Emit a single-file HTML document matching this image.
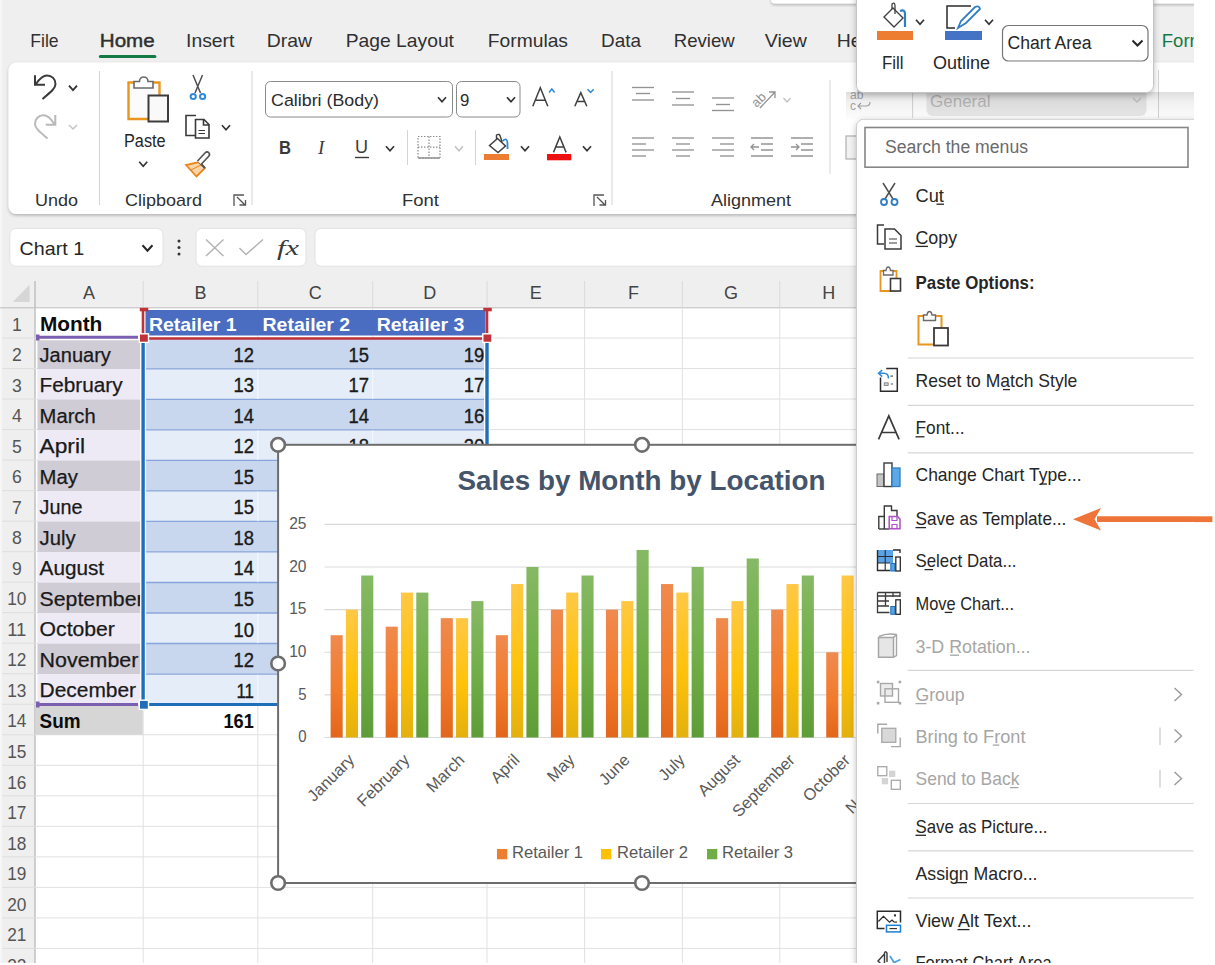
<!DOCTYPE html>
<html><head><meta charset="utf-8"><title>Excel - Save as Template</title>
<style>html,body{margin:0;padding:0;background:#fff;}body{width:1215px;height:965px;overflow:hidden;font-family:"Liberation Sans",sans-serif;}svg{display:block;}</style>
</head><body>
<svg width="1215" height="965" viewBox="0 0 1215 965" font-family="'Liberation Sans', sans-serif"><rect x="0" y="0" width="1215" height="965" fill="#ffffff"/>
<rect x="0" y="0" width="1194" height="963" fill="#efefef"/>
<rect x="0" y="0" width="2" height="963" fill="#f6f6f6"/>
<text x="30.3" y="46.6" font-size="18.5" fill="#303030" textLength="28.3" lengthAdjust="spacingAndGlyphs">File</text>
<text x="99.8" y="46.6" font-size="18.5" fill="#303030" textLength="54.9" lengthAdjust="spacingAndGlyphs" stroke="#303030" stroke-width="0.45">Home</text>
<text x="186" y="46.6" font-size="18.5" fill="#303030" textLength="48.4" lengthAdjust="spacingAndGlyphs">Insert</text>
<text x="266.7" y="46.6" font-size="18.5" fill="#303030" textLength="45.3" lengthAdjust="spacingAndGlyphs">Draw</text>
<text x="345.7" y="46.6" font-size="18.5" fill="#303030" textLength="108.3" lengthAdjust="spacingAndGlyphs">Page Layout</text>
<text x="487.8" y="46.6" font-size="18.5" fill="#303030" textLength="80.2" lengthAdjust="spacingAndGlyphs">Formulas</text>
<text x="601" y="46.6" font-size="18.5" fill="#303030" textLength="40" lengthAdjust="spacingAndGlyphs">Data</text>
<text x="673.8" y="46.6" font-size="18.5" fill="#303030" textLength="61" lengthAdjust="spacingAndGlyphs">Review</text>
<text x="764.8" y="46.6" font-size="18.5" fill="#303030" textLength="42" lengthAdjust="spacingAndGlyphs">View</text>
<text x="836.8" y="46.6" font-size="18.5" fill="#303030" textLength="40" lengthAdjust="spacingAndGlyphs">Help</text>
<rect x="98.8" y="55" width="57.6" height="3" fill="#137a43" rx="1.5"/>
<defs><filter id="sh" x="-5%" y="-20%" width="110%" height="140%"><feDropShadow dx="0" dy="1.5" stdDeviation="1.5" flood-color="#000" flood-opacity="0.26"/></filter><filter id="sh2" x="-20%" y="-20%" width="140%" height="140%"><feDropShadow dx="0" dy="2" stdDeviation="3" flood-color="#000" flood-opacity="0.25"/></filter><linearGradient id="g1" x1="0" y1="0" x2="0" y2="1"><stop offset="0" stop-color="#ef8a4e"/><stop offset="0.55" stop-color="#f27b2c"/><stop offset="1" stop-color="#e2661b"/></linearGradient><linearGradient id="g2" x1="0" y1="0" x2="0" y2="1"><stop offset="0" stop-color="#ffc845"/><stop offset="0.55" stop-color="#ffc20a"/><stop offset="1" stop-color="#e3b00e"/></linearGradient><linearGradient id="g3" x1="0" y1="0" x2="0" y2="1"><stop offset="0" stop-color="#86b964"/><stop offset="0.55" stop-color="#70ad47"/><stop offset="1" stop-color="#5e9c37"/></linearGradient><clipPath id="clipA"><rect x="35" y="300" width="106.5" height="450"/></clipPath></defs>
<rect x="8.5" y="62.5" width="1260" height="151.5" fill="#ffffff" rx="8" filter="url(#sh)"/>
<line x1="99.5" y1="71" x2="99.5" y2="205" stroke="#d4d4d4" stroke-width="1"/>
<line x1="252" y1="71" x2="252" y2="205" stroke="#d4d4d4" stroke-width="1"/>
<line x1="612" y1="71" x2="612" y2="205" stroke="#d4d4d4" stroke-width="1"/>
<line x1="830" y1="80" x2="830" y2="174" stroke="#d4d4d4" stroke-width="1"/>
<line x1="912.6" y1="80" x2="912.6" y2="118" stroke="#d4d4d4" stroke-width="1"/>
<line x1="1158.5" y1="70" x2="1158.5" y2="118" stroke="#d4d4d4" stroke-width="1"/>
<text x="35" y="206" font-size="17" fill="#303030" textLength="43" lengthAdjust="spacingAndGlyphs">Undo</text>
<text x="125" y="206" font-size="17" fill="#303030" textLength="77" lengthAdjust="spacingAndGlyphs">Clipboard</text>
<text x="402" y="206" font-size="17" fill="#303030" textLength="37" lengthAdjust="spacingAndGlyphs">Font</text>
<text x="711" y="206" font-size="17" fill="#303030" textLength="80" lengthAdjust="spacingAndGlyphs">Alignment</text>
<path d="M234,206 V195 H244 M237,197 L245,205 M239.5,205 H245.5 V200" fill="none" stroke="#555" stroke-width="1.3"/>
<path d="M594,206 V195 H604 M597,197 L605,205 M599.5,205 H605.5 V200" fill="none" stroke="#555" stroke-width="1.3"/>
<path d="M35,75.3 V84.8 H45 M36,84 C40,78 44,75.5 47,75.5 C52,75.5 55.5,79 55.5,84 C55.5,88 52,91 42.5,99" fill="none" stroke="#3a3a3a" stroke-width="2"/>
<path d="M69,85.55 L73,90.05 L77,85.55" fill="none" stroke="#333" stroke-width="1.8"/>
<path d="M55.3,115 V124.7 H45.7 M54.3,124 C50.5,118 46.5,115.3 43.5,115.3 C38.5,115.3 35,119 35,124 C35,128 38.5,131 47.5,138.5" fill="none" stroke="#b9b9b9" stroke-width="2"/>
<path d="M69,125 L73,129 L77,125" fill="none" stroke="#c4c4c4" stroke-width="1.5"/>
<path d="M128.5,82.5 H159.5 V119 H128.5 Z" fill="#fbfbfb" stroke="#e8961e" stroke-width="2.4"/>
<path d="M134,88 V81.5 H139.5 C139.5,75.5 148,75.5 148,81.5 H153 V88 Z" fill="#ffffff" stroke="#6a6a6a" stroke-width="1.6"/>
<rect x="148.5" y="95.5" width="19.5" height="26" fill="#f9f9f9" stroke="#3c3c3c" stroke-width="2"/>
<text x="124" y="146.5" font-size="17.5" fill="#262626" textLength="41.6" lengthAdjust="spacingAndGlyphs">Paste</text>
<path d="M139.2,161.75 L143.2,166.25 L147.2,161.75" fill="none" stroke="#333" stroke-width="1.7"/>
<path d="M193,75 L200.5,93 M202.5,75 L195,93" fill="none" stroke="#505050" stroke-width="1.5"/>
<circle cx="193.2" cy="96.5" r="2.6" fill="#ffffff" stroke="#2f8ad8" stroke-width="2"/>
<circle cx="202.6" cy="96.5" r="2.6" fill="#ffffff" stroke="#2f8ad8" stroke-width="2"/>
<path d="M196,115.5 H186 V135.5 H195" fill="none" stroke="#3a3a3a" stroke-width="1.6"/>
<path d="M195.5,119.5 H204 L209,124.5 V138 H195.5 Z M203.5,119.5 V125 H209" fill="#fff" stroke="#3a3a3a" stroke-width="1.6"/>
<path d="M198.5,130.5 H205 M198.5,133.5 H205" fill="none" stroke="#3a3a3a" stroke-width="1.1"/>
<path d="M222,125.25 L226,129.75 L230,125.25" fill="none" stroke="#333" stroke-width="1.7"/>
<path d="M186,165 L196.5,176.5 L205,168 L199,162 Z" fill="#fcd3a4" stroke="#e8861e" stroke-width="1.8"/>
<path d="M191,170 L201,165" fill="none" stroke="#e8861e" stroke-width="1"/>
<path d="M199,162 L205,168" fill="none" stroke="#505050" stroke-width="1.8"/>
<path d="M201,164.5 L208.5,156.5 Q210.5,154.5 208.8,152.8 Q207,151 205,153 L197.5,161" fill="#fff" stroke="#505050" stroke-width="1.6"/>
<rect x="265.5" y="81.5" width="187" height="35.5" fill="#ffffff" stroke="#8a8a8a" stroke-width="1" rx="5"/>
<text x="271" y="105.8" font-size="16.8" fill="#2b2b2b" textLength="108" lengthAdjust="spacingAndGlyphs">Calibri (Body)</text>
<path d="M438,97.25 L442,101.75 L446,97.25" fill="none" stroke="#333" stroke-width="1.7"/>
<rect x="456.5" y="81.5" width="63.5" height="35.5" fill="#ffffff" stroke="#8a8a8a" stroke-width="1" rx="5"/>
<text x="460" y="105.8" font-size="16.8" fill="#2b2b2b">9</text>
<path d="M507,97.25 L511,101.75 L515,97.25" fill="none" stroke="#333" stroke-width="1.7"/>
<path d="M532.8,106.3 L540.3,87.8 L547.8,106.3 M535.3,100.2 H545.3" fill="none" stroke="#404040" stroke-width="1.5"/>
<path d="M549,92.5 L551.8,89 L554.6,92.5" fill="none" stroke="#2f8ad8" stroke-width="1.5"/>
<path d="M574.8,106.3 L580.8,92.6 L586.8,106.3 M576.9,101.4 H584.7" fill="none" stroke="#404040" stroke-width="1.5"/>
<path d="M587.5,89.2 L590.6,92.4 L593.7,89.2" fill="none" stroke="#2f8ad8" stroke-width="1.5"/>
<text x="279" y="154" font-size="19" fill="#3a3a3a" font-weight="bold" textLength="12" lengthAdjust="spacingAndGlyphs">B</text>
<text x="318" y="154" font-size="19" fill="#3a3a3a" font-style="italic" font-family="Liberation Serif">I</text>
<text x="355" y="153" font-size="18" fill="#3a3a3a" textLength="13" lengthAdjust="spacingAndGlyphs">U</text>
<line x1="355" y1="157.5" x2="369" y2="157.5" stroke="#3a3a3a" stroke-width="1.4"/>
<path d="M386,146.25 L390,150.75 L394,146.25" fill="none" stroke="#333" stroke-width="1.7"/>
<line x1="407.5" y1="130" x2="407.5" y2="165" stroke="#d4d4d4" stroke-width="1"/>
<rect x="418" y="136.5" width="22" height="21.5" fill="none" stroke="#8a8a8a" stroke-width="1.2" stroke-dasharray="1.4,1.6"/>
<path d="M429,136.5 V158 M418,147.2 H440" fill="none" stroke="#8a8a8a" stroke-width="1.2" stroke-dasharray="1.4,1.6"/>
<line x1="418" y1="158" x2="440" y2="158" stroke="#8a8a8a" stroke-width="1.4"/>
<path d="M455,146.25 L459,150.75 L463,146.25" fill="none" stroke="#c0c0c0" stroke-width="1.5"/>
<line x1="475.5" y1="130" x2="475.5" y2="165" stroke="#d4d4d4" stroke-width="1"/>
<path d="M489.5,145.5 L497.5,138.5 L505.5,146 L498,152.5 Z" fill="#fff" stroke="#404040" stroke-width="1.5"/>
<path d="M496.5,139.5 V135 Q499.5,133 500.5,137 L502,142" fill="none" stroke="#404040" stroke-width="1.4"/>
<path d="M502.5,141 Q507,137 507.5,143 V149" fill="none" stroke="#2f8ad8" stroke-width="1.8"/>
<rect x="484" y="154" width="25" height="6" fill="#ed7d31"/>
<path d="M521,146.25 L525,150.75 L529,146.25" fill="none" stroke="#333" stroke-width="1.7"/>
<path d="M553.5,152.4 L559.8,137 L566.1,152.4 M555.6,147 H564" fill="none" stroke="#404040" stroke-width="1.5"/>
<rect x="547" y="154" width="24.3" height="6.3" fill="#ee1111"/>
<path d="M583,146.25 L587,150.75 L591,146.25" fill="none" stroke="#333" stroke-width="1.7"/>
<line x1="632" y1="87.5" x2="654" y2="87.5" stroke="#939393" stroke-width="1.35"/>
<line x1="636" y1="93.5" x2="650" y2="93.5" stroke="#939393" stroke-width="1.35"/>
<line x1="632" y1="100" x2="654" y2="100" stroke="#939393" stroke-width="1.35"/>
<line x1="672" y1="92" x2="694" y2="92" stroke="#939393" stroke-width="1.35"/>
<line x1="676" y1="98.5" x2="690" y2="98.5" stroke="#939393" stroke-width="1.35"/>
<line x1="672" y1="105" x2="694" y2="105" stroke="#939393" stroke-width="1.35"/>
<line x1="712" y1="98" x2="734" y2="98" stroke="#939393" stroke-width="1.35"/>
<line x1="716" y1="104.5" x2="730" y2="104.5" stroke="#939393" stroke-width="1.35"/>
<line x1="712" y1="110.5" x2="734" y2="110.5" stroke="#939393" stroke-width="1.35"/>
<text x="750" y="104" font-size="13" fill="#939393" transform="rotate(-45 758 98)">ab</text>
<path d="M760,108 L775,92 M769,92 H775 V98" fill="none" stroke="#939393" stroke-width="1.3"/>
<path d="M783.5,98 L787,102 L790.5,98" fill="none" stroke="#c0c0c0" stroke-width="1.3"/>
<line x1="632" y1="138" x2="654" y2="138" stroke="#939393" stroke-width="1.35"/>
<line x1="632" y1="144" x2="646" y2="144" stroke="#939393" stroke-width="1.35"/>
<line x1="632" y1="150" x2="654" y2="150" stroke="#939393" stroke-width="1.35"/>
<line x1="632" y1="156" x2="646" y2="156" stroke="#939393" stroke-width="1.35"/>
<line x1="672" y1="138" x2="694" y2="138" stroke="#939393" stroke-width="1.35"/>
<line x1="676" y1="144" x2="690" y2="144" stroke="#939393" stroke-width="1.35"/>
<line x1="672" y1="150" x2="694" y2="150" stroke="#939393" stroke-width="1.35"/>
<line x1="676" y1="156" x2="690" y2="156" stroke="#939393" stroke-width="1.35"/>
<line x1="712" y1="138" x2="734" y2="138" stroke="#939393" stroke-width="1.35"/>
<line x1="720" y1="144" x2="734" y2="144" stroke="#939393" stroke-width="1.35"/>
<line x1="712" y1="150" x2="734" y2="150" stroke="#939393" stroke-width="1.35"/>
<line x1="720" y1="156" x2="734" y2="156" stroke="#939393" stroke-width="1.35"/>
<line x1="751" y1="138" x2="773" y2="138" stroke="#939393" stroke-width="1.5"/>
<line x1="761" y1="144" x2="773" y2="144" stroke="#939393" stroke-width="1.5"/>
<line x1="761" y1="150" x2="773" y2="150" stroke="#939393" stroke-width="1.5"/>
<line x1="751" y1="156" x2="773" y2="156" stroke="#939393" stroke-width="1.5"/>
<path d="M751,147 H759 M754,144 L751,147 L754,150" fill="none" stroke="#939393" stroke-width="1.3"/>
<line x1="791" y1="138" x2="813" y2="138" stroke="#939393" stroke-width="1.5"/>
<line x1="801" y1="144" x2="813" y2="144" stroke="#939393" stroke-width="1.5"/>
<line x1="801" y1="150" x2="813" y2="150" stroke="#939393" stroke-width="1.5"/>
<line x1="791" y1="156" x2="813" y2="156" stroke="#939393" stroke-width="1.5"/>
<path d="M791,147 H799 M796,144 L799,147 L796,150" fill="none" stroke="#939393" stroke-width="1.3"/>
<text x="850" y="99" font-size="12" fill="#a8a8a8">ab</text>
<text x="850" y="110" font-size="12" fill="#a8a8a8">c</text>
<path d="M858,106 H866 Q870,106 870,102 M861,103 L858,106 L861,109" fill="none" stroke="#a8a8a8" stroke-width="1.2"/>
<rect x="846" y="136" width="12" height="23" fill="#f2f2f2" stroke="#b0b0b0" stroke-width="1.2"/>
<rect x="926.5" y="60" width="220" height="56" fill="#e9e9e9" rx="6"/>
<text x="930" y="107" font-size="17" fill="#b8b8b8">General</text>
<path d="M1133,98 L1137,102 L1141,98" fill="none" stroke="#c4c4c4" stroke-width="1.5"/>
<rect x="9.8" y="228.4" width="153.2" height="37.8" fill="#ffffff" stroke="#e2e2e2" stroke-width="1" rx="6"/>
<text x="19.6" y="254.8" font-size="19" fill="#262626" textLength="64.5" lengthAdjust="spacingAndGlyphs">Chart 1</text>
<path d="M142.5,245.25 L147.5,250.75 L152.5,245.25" fill="none" stroke="#262626" stroke-width="2"/>
<circle cx="179" cy="241" r="1.5" fill="#333"/>
<circle cx="179" cy="247.5" r="1.5" fill="#333"/>
<circle cx="179" cy="254" r="1.5" fill="#333"/>
<rect x="196" y="228.4" width="110" height="37.8" fill="#ffffff" stroke="#e2e2e2" stroke-width="1" rx="6"/>
<path d="M206,239.5 L223.5,256 M223.5,239.5 L206,256" fill="none" stroke="#b4b4b4" stroke-width="1.5"/>
<path d="M239.5,248 L246,254.5 L263,239.5" fill="none" stroke="#b4b4b4" stroke-width="1.5"/>
<text x="277" y="255" font-size="21" fill="#3a3a3a" textLength="22" lengthAdjust="spacingAndGlyphs" font-style="italic" font-family="Liberation Serif">fx</text>
<rect x="315" y="228.4" width="900" height="37.8" fill="#ffffff" stroke="#e2e2e2" stroke-width="1" rx="6"/>
<rect x="35" y="307.5" width="1159" height="655.5" fill="#ffffff"/>
<path d="M29.6,284.7 V302 H12.8 Z" fill="#d6d6d6" stroke="none" stroke-width="1"/>
<line x1="143.2" y1="281" x2="143.2" y2="307.5" stroke="#dadada" stroke-width="1"/>
<line x1="257.8" y1="281" x2="257.8" y2="307.5" stroke="#dadada" stroke-width="1"/>
<line x1="372.7" y1="281" x2="372.7" y2="307.5" stroke="#dadada" stroke-width="1"/>
<line x1="487" y1="281" x2="487" y2="307.5" stroke="#dadada" stroke-width="1"/>
<line x1="584.6" y1="281" x2="584.6" y2="307.5" stroke="#dadada" stroke-width="1"/>
<line x1="682.4" y1="281" x2="682.4" y2="307.5" stroke="#dadada" stroke-width="1"/>
<line x1="779.8" y1="281" x2="779.8" y2="307.5" stroke="#dadada" stroke-width="1"/>
<line x1="877.5" y1="281" x2="877.5" y2="307.5" stroke="#dadada" stroke-width="1"/>
<line x1="35" y1="281" x2="35" y2="963" stroke="#b8b8b8" stroke-width="1.3"/>
<line x1="0" y1="307.8" x2="1194" y2="307.8" stroke="#bdbdbd" stroke-width="1"/>
<text x="89.1" y="299" font-size="18" fill="#444" text-anchor="middle">A</text>
<text x="200.5" y="299" font-size="18" fill="#444" text-anchor="middle">B</text>
<text x="315.25" y="299" font-size="18" fill="#444" text-anchor="middle">C</text>
<text x="429.85" y="299" font-size="18" fill="#444" text-anchor="middle">D</text>
<text x="535.8" y="299" font-size="18" fill="#444" text-anchor="middle">E</text>
<text x="633.5" y="299" font-size="18" fill="#444" text-anchor="middle">F</text>
<text x="731.1" y="299" font-size="18" fill="#444" text-anchor="middle">G</text>
<text x="828.65" y="299" font-size="18" fill="#444" text-anchor="middle">H</text>
<text x="16.8" y="330.7" font-size="18.5" fill="#555" text-anchor="middle" textLength="9.8" lengthAdjust="spacingAndGlyphs">1</text>
<line x1="2" y1="338.02" x2="35" y2="338.02" stroke="#dedede" stroke-width="1"/>
<text x="16.8" y="361.22" font-size="18.5" fill="#555" text-anchor="middle" textLength="9.8" lengthAdjust="spacingAndGlyphs">2</text>
<line x1="2" y1="368.54" x2="35" y2="368.54" stroke="#dedede" stroke-width="1"/>
<text x="16.8" y="391.74" font-size="18.5" fill="#555" text-anchor="middle" textLength="9.8" lengthAdjust="spacingAndGlyphs">3</text>
<line x1="2" y1="399.06" x2="35" y2="399.06" stroke="#dedede" stroke-width="1"/>
<text x="16.8" y="422.26" font-size="18.5" fill="#555" text-anchor="middle" textLength="9.8" lengthAdjust="spacingAndGlyphs">4</text>
<line x1="2" y1="429.58" x2="35" y2="429.58" stroke="#dedede" stroke-width="1"/>
<text x="16.8" y="452.78" font-size="18.5" fill="#555" text-anchor="middle" textLength="9.8" lengthAdjust="spacingAndGlyphs">5</text>
<line x1="2" y1="460.1" x2="35" y2="460.1" stroke="#dedede" stroke-width="1"/>
<text x="16.8" y="483.3" font-size="18.5" fill="#555" text-anchor="middle" textLength="9.8" lengthAdjust="spacingAndGlyphs">6</text>
<line x1="2" y1="490.62" x2="35" y2="490.62" stroke="#dedede" stroke-width="1"/>
<text x="16.8" y="513.82" font-size="18.5" fill="#555" text-anchor="middle" textLength="9.8" lengthAdjust="spacingAndGlyphs">7</text>
<line x1="2" y1="521.14" x2="35" y2="521.14" stroke="#dedede" stroke-width="1"/>
<text x="16.8" y="544.34" font-size="18.5" fill="#555" text-anchor="middle" textLength="9.8" lengthAdjust="spacingAndGlyphs">8</text>
<line x1="2" y1="551.66" x2="35" y2="551.66" stroke="#dedede" stroke-width="1"/>
<text x="16.8" y="574.86" font-size="18.5" fill="#555" text-anchor="middle" textLength="9.8" lengthAdjust="spacingAndGlyphs">9</text>
<line x1="2" y1="582.18" x2="35" y2="582.18" stroke="#dedede" stroke-width="1"/>
<text x="16.8" y="605.38" font-size="18.5" fill="#555" text-anchor="middle" textLength="19.2" lengthAdjust="spacingAndGlyphs">10</text>
<line x1="2" y1="612.7" x2="35" y2="612.7" stroke="#dedede" stroke-width="1"/>
<text x="16.8" y="635.9" font-size="18.5" fill="#555" text-anchor="middle" textLength="19.2" lengthAdjust="spacingAndGlyphs">11</text>
<line x1="2" y1="643.22" x2="35" y2="643.22" stroke="#dedede" stroke-width="1"/>
<text x="16.8" y="666.42" font-size="18.5" fill="#555" text-anchor="middle" textLength="19.2" lengthAdjust="spacingAndGlyphs">12</text>
<line x1="2" y1="673.74" x2="35" y2="673.74" stroke="#dedede" stroke-width="1"/>
<text x="16.8" y="696.94" font-size="18.5" fill="#555" text-anchor="middle" textLength="19.2" lengthAdjust="spacingAndGlyphs">13</text>
<line x1="2" y1="704.26" x2="35" y2="704.26" stroke="#dedede" stroke-width="1"/>
<text x="16.8" y="727.46" font-size="18.5" fill="#555" text-anchor="middle" textLength="19.2" lengthAdjust="spacingAndGlyphs">14</text>
<line x1="2" y1="734.78" x2="35" y2="734.78" stroke="#dedede" stroke-width="1"/>
<text x="16.8" y="757.98" font-size="18.5" fill="#555" text-anchor="middle" textLength="19.2" lengthAdjust="spacingAndGlyphs">15</text>
<line x1="2" y1="765.3" x2="35" y2="765.3" stroke="#dedede" stroke-width="1"/>
<text x="16.8" y="788.5" font-size="18.5" fill="#555" text-anchor="middle" textLength="19.2" lengthAdjust="spacingAndGlyphs">16</text>
<line x1="2" y1="795.82" x2="35" y2="795.82" stroke="#dedede" stroke-width="1"/>
<text x="16.8" y="819.02" font-size="18.5" fill="#555" text-anchor="middle" textLength="19.2" lengthAdjust="spacingAndGlyphs">17</text>
<line x1="2" y1="826.34" x2="35" y2="826.34" stroke="#dedede" stroke-width="1"/>
<text x="16.8" y="849.54" font-size="18.5" fill="#555" text-anchor="middle" textLength="19.2" lengthAdjust="spacingAndGlyphs">18</text>
<line x1="2" y1="856.86" x2="35" y2="856.86" stroke="#dedede" stroke-width="1"/>
<text x="16.8" y="880.06" font-size="18.5" fill="#555" text-anchor="middle" textLength="19.2" lengthAdjust="spacingAndGlyphs">19</text>
<line x1="2" y1="887.38" x2="35" y2="887.38" stroke="#dedede" stroke-width="1"/>
<text x="16.8" y="910.58" font-size="18.5" fill="#555" text-anchor="middle" textLength="19.2" lengthAdjust="spacingAndGlyphs">20</text>
<line x1="2" y1="917.9" x2="35" y2="917.9" stroke="#dedede" stroke-width="1"/>
<text x="16.8" y="941.1" font-size="18.5" fill="#555" text-anchor="middle" textLength="19.2" lengthAdjust="spacingAndGlyphs">21</text>
<line x1="2" y1="948.42" x2="35" y2="948.42" stroke="#dedede" stroke-width="1"/>
<text x="16.8" y="971.62" font-size="18.5" fill="#555" text-anchor="middle" textLength="19.2" lengthAdjust="spacingAndGlyphs">22</text>
<line x1="35" y1="338.02" x2="1194" y2="338.02" stroke="#e1e1e1" stroke-width="1"/>
<line x1="35" y1="368.54" x2="1194" y2="368.54" stroke="#e1e1e1" stroke-width="1"/>
<line x1="35" y1="399.06" x2="1194" y2="399.06" stroke="#e1e1e1" stroke-width="1"/>
<line x1="35" y1="429.58" x2="1194" y2="429.58" stroke="#e1e1e1" stroke-width="1"/>
<line x1="35" y1="460.1" x2="1194" y2="460.1" stroke="#e1e1e1" stroke-width="1"/>
<line x1="35" y1="490.62" x2="1194" y2="490.62" stroke="#e1e1e1" stroke-width="1"/>
<line x1="35" y1="521.14" x2="1194" y2="521.14" stroke="#e1e1e1" stroke-width="1"/>
<line x1="35" y1="551.66" x2="1194" y2="551.66" stroke="#e1e1e1" stroke-width="1"/>
<line x1="35" y1="582.18" x2="1194" y2="582.18" stroke="#e1e1e1" stroke-width="1"/>
<line x1="35" y1="612.7" x2="1194" y2="612.7" stroke="#e1e1e1" stroke-width="1"/>
<line x1="35" y1="643.22" x2="1194" y2="643.22" stroke="#e1e1e1" stroke-width="1"/>
<line x1="35" y1="673.74" x2="1194" y2="673.74" stroke="#e1e1e1" stroke-width="1"/>
<line x1="35" y1="704.26" x2="1194" y2="704.26" stroke="#e1e1e1" stroke-width="1"/>
<line x1="35" y1="734.78" x2="1194" y2="734.78" stroke="#e1e1e1" stroke-width="1"/>
<line x1="35" y1="765.3" x2="1194" y2="765.3" stroke="#e1e1e1" stroke-width="1"/>
<line x1="35" y1="795.82" x2="1194" y2="795.82" stroke="#e1e1e1" stroke-width="1"/>
<line x1="35" y1="826.34" x2="1194" y2="826.34" stroke="#e1e1e1" stroke-width="1"/>
<line x1="35" y1="856.86" x2="1194" y2="856.86" stroke="#e1e1e1" stroke-width="1"/>
<line x1="35" y1="887.38" x2="1194" y2="887.38" stroke="#e1e1e1" stroke-width="1"/>
<line x1="35" y1="917.9" x2="1194" y2="917.9" stroke="#e1e1e1" stroke-width="1"/>
<line x1="35" y1="948.42" x2="1194" y2="948.42" stroke="#e1e1e1" stroke-width="1"/>
<line x1="143.2" y1="307.5" x2="143.2" y2="963" stroke="#e1e1e1" stroke-width="1"/>
<line x1="257.8" y1="307.5" x2="257.8" y2="963" stroke="#e1e1e1" stroke-width="1"/>
<line x1="372.7" y1="307.5" x2="372.7" y2="963" stroke="#e1e1e1" stroke-width="1"/>
<line x1="487" y1="307.5" x2="487" y2="963" stroke="#e1e1e1" stroke-width="1"/>
<line x1="584.6" y1="307.5" x2="584.6" y2="963" stroke="#e1e1e1" stroke-width="1"/>
<line x1="682.4" y1="307.5" x2="682.4" y2="963" stroke="#e1e1e1" stroke-width="1"/>
<line x1="779.8" y1="307.5" x2="779.8" y2="963" stroke="#e1e1e1" stroke-width="1"/>
<line x1="877.5" y1="307.5" x2="877.5" y2="963" stroke="#e1e1e1" stroke-width="1"/>
<rect x="37.5" y="338.52" width="104" height="30.52" fill="#d0ccd6"/>
<rect x="146" y="338.82" width="339" height="29.72" fill="#c8d6ee"/>
<rect x="37.5" y="369.04" width="104" height="30.52" fill="#eeeaf5"/>
<rect x="146" y="369.34" width="339" height="29.72" fill="#e5edf8"/>
<rect x="37.5" y="399.56" width="104" height="30.52" fill="#d0ccd6"/>
<rect x="146" y="399.86" width="339" height="29.72" fill="#c8d6ee"/>
<rect x="37.5" y="430.08" width="104" height="30.52" fill="#eeeaf5"/>
<rect x="146" y="430.38" width="339" height="29.72" fill="#e5edf8"/>
<rect x="37.5" y="460.6" width="104" height="30.52" fill="#d0ccd6"/>
<rect x="146" y="460.9" width="339" height="29.72" fill="#c8d6ee"/>
<rect x="37.5" y="491.12" width="104" height="30.52" fill="#eeeaf5"/>
<rect x="146" y="491.42" width="339" height="29.72" fill="#e5edf8"/>
<rect x="37.5" y="521.64" width="104" height="30.52" fill="#d0ccd6"/>
<rect x="146" y="521.94" width="339" height="29.72" fill="#c8d6ee"/>
<rect x="37.5" y="552.16" width="104" height="30.52" fill="#eeeaf5"/>
<rect x="146" y="552.46" width="339" height="29.72" fill="#e5edf8"/>
<rect x="37.5" y="582.68" width="104" height="30.52" fill="#d0ccd6"/>
<rect x="146" y="582.98" width="339" height="29.72" fill="#c8d6ee"/>
<rect x="37.5" y="613.2" width="104" height="30.52" fill="#eeeaf5"/>
<rect x="146" y="613.5" width="339" height="29.72" fill="#e5edf8"/>
<rect x="37.5" y="643.72" width="104" height="30.52" fill="#d0ccd6"/>
<rect x="146" y="644.02" width="339" height="29.72" fill="#c8d6ee"/>
<rect x="37.5" y="674.24" width="104" height="30.52" fill="#eeeaf5"/>
<rect x="146" y="674.54" width="339" height="29.72" fill="#e5edf8"/>
<line x1="145" y1="368.84" x2="485.5" y2="368.84" stroke="#86a5da" stroke-width="1.3"/>
<line x1="145" y1="399.36" x2="485.5" y2="399.36" stroke="#86a5da" stroke-width="1.3"/>
<line x1="145" y1="429.88" x2="485.5" y2="429.88" stroke="#86a5da" stroke-width="1.3"/>
<line x1="145" y1="460.4" x2="485.5" y2="460.4" stroke="#86a5da" stroke-width="1.3"/>
<line x1="145" y1="490.92" x2="485.5" y2="490.92" stroke="#86a5da" stroke-width="1.3"/>
<line x1="145" y1="521.44" x2="485.5" y2="521.44" stroke="#86a5da" stroke-width="1.3"/>
<line x1="145" y1="551.96" x2="485.5" y2="551.96" stroke="#86a5da" stroke-width="1.3"/>
<line x1="145" y1="582.48" x2="485.5" y2="582.48" stroke="#86a5da" stroke-width="1.3"/>
<line x1="145" y1="613" x2="485.5" y2="613" stroke="#86a5da" stroke-width="1.3"/>
<line x1="145" y1="643.52" x2="485.5" y2="643.52" stroke="#86a5da" stroke-width="1.3"/>
<line x1="145" y1="674.04" x2="485.5" y2="674.04" stroke="#86a5da" stroke-width="1.3"/>
<line x1="257.8" y1="369.54" x2="257.8" y2="399.06" stroke="#f4f8fd" stroke-width="1.2"/>
<line x1="257.8" y1="430.58" x2="257.8" y2="460.1" stroke="#f4f8fd" stroke-width="1.2"/>
<line x1="257.8" y1="491.62" x2="257.8" y2="521.14" stroke="#f4f8fd" stroke-width="1.2"/>
<line x1="257.8" y1="552.66" x2="257.8" y2="582.18" stroke="#f4f8fd" stroke-width="1.2"/>
<line x1="257.8" y1="613.7" x2="257.8" y2="643.22" stroke="#f4f8fd" stroke-width="1.2"/>
<line x1="257.8" y1="674.74" x2="257.8" y2="704.26" stroke="#f4f8fd" stroke-width="1.2"/>
<line x1="372.7" y1="369.54" x2="372.7" y2="399.06" stroke="#f4f8fd" stroke-width="1.2"/>
<line x1="372.7" y1="430.58" x2="372.7" y2="460.1" stroke="#f4f8fd" stroke-width="1.2"/>
<line x1="372.7" y1="491.62" x2="372.7" y2="521.14" stroke="#f4f8fd" stroke-width="1.2"/>
<line x1="372.7" y1="552.66" x2="372.7" y2="582.18" stroke="#f4f8fd" stroke-width="1.2"/>
<line x1="372.7" y1="613.7" x2="372.7" y2="643.22" stroke="#f4f8fd" stroke-width="1.2"/>
<line x1="372.7" y1="674.74" x2="372.7" y2="704.26" stroke="#f4f8fd" stroke-width="1.2"/>
<rect x="145.5" y="310" width="340" height="25.5" fill="#4a6dc1"/>
<text x="39.9" y="330.9" font-size="19.5" fill="#0c0c0c" font-weight="bold" textLength="62.4" lengthAdjust="spacingAndGlyphs">Month</text>
<text x="148.9" y="330.9" font-size="19" fill="#ffffff" font-weight="bold" textLength="87.7" lengthAdjust="spacingAndGlyphs">Retailer 1</text>
<text x="262.5" y="330.9" font-size="19" fill="#ffffff" font-weight="bold" textLength="87.7" lengthAdjust="spacingAndGlyphs">Retailer 2</text>
<text x="376.7" y="330.9" font-size="19" fill="#ffffff" font-weight="bold" textLength="87.7" lengthAdjust="spacingAndGlyphs">Retailer 3</text>
<text x="39.6" y="361.72" font-size="19.5" fill="#1a1a1a" textLength="71.3" lengthAdjust="spacingAndGlyphs" clip-path="url(#clipA)" stroke="#1a1a1a" stroke-width="0.25">January</text>
<text x="254" y="361.82" font-size="19.5" fill="#1a1a1a" text-anchor="end" textLength="20.5" lengthAdjust="spacingAndGlyphs" stroke="#1a1a1a" stroke-width="0.35">12</text>
<text x="369" y="361.82" font-size="19.5" fill="#1a1a1a" text-anchor="end" textLength="20.5" lengthAdjust="spacingAndGlyphs" stroke="#1a1a1a" stroke-width="0.35">15</text>
<text x="484.2" y="361.82" font-size="19.5" fill="#1a1a1a" text-anchor="end" textLength="20.5" lengthAdjust="spacingAndGlyphs" stroke="#1a1a1a" stroke-width="0.35">19</text>
<text x="39.6" y="392.24" font-size="19.5" fill="#1a1a1a" textLength="83" lengthAdjust="spacingAndGlyphs" clip-path="url(#clipA)" stroke="#1a1a1a" stroke-width="0.25">February</text>
<text x="254" y="392.34" font-size="19.5" fill="#1a1a1a" text-anchor="end" textLength="20.5" lengthAdjust="spacingAndGlyphs" stroke="#1a1a1a" stroke-width="0.35">13</text>
<text x="369" y="392.34" font-size="19.5" fill="#1a1a1a" text-anchor="end" textLength="20.5" lengthAdjust="spacingAndGlyphs" stroke="#1a1a1a" stroke-width="0.35">17</text>
<text x="484.2" y="392.34" font-size="19.5" fill="#1a1a1a" text-anchor="end" textLength="20.5" lengthAdjust="spacingAndGlyphs" stroke="#1a1a1a" stroke-width="0.35">17</text>
<text x="39.6" y="422.76" font-size="19.5" fill="#1a1a1a" textLength="56.1" lengthAdjust="spacingAndGlyphs" clip-path="url(#clipA)" stroke="#1a1a1a" stroke-width="0.25">March</text>
<text x="254" y="422.86" font-size="19.5" fill="#1a1a1a" text-anchor="end" textLength="20.5" lengthAdjust="spacingAndGlyphs" stroke="#1a1a1a" stroke-width="0.35">14</text>
<text x="369" y="422.86" font-size="19.5" fill="#1a1a1a" text-anchor="end" textLength="20.5" lengthAdjust="spacingAndGlyphs" stroke="#1a1a1a" stroke-width="0.35">14</text>
<text x="484.2" y="422.86" font-size="19.5" fill="#1a1a1a" text-anchor="end" textLength="20.5" lengthAdjust="spacingAndGlyphs" stroke="#1a1a1a" stroke-width="0.35">16</text>
<text x="39.6" y="453.28" font-size="19.5" fill="#1a1a1a" textLength="45.4" lengthAdjust="spacingAndGlyphs" clip-path="url(#clipA)" stroke="#1a1a1a" stroke-width="0.25">April</text>
<text x="254" y="453.38" font-size="19.5" fill="#1a1a1a" text-anchor="end" textLength="20.5" lengthAdjust="spacingAndGlyphs" stroke="#1a1a1a" stroke-width="0.35">12</text>
<text x="369" y="453.38" font-size="19.5" fill="#1a1a1a" text-anchor="end" textLength="20.5" lengthAdjust="spacingAndGlyphs" stroke="#1a1a1a" stroke-width="0.35">18</text>
<text x="484.2" y="453.38" font-size="19.5" fill="#1a1a1a" text-anchor="end" textLength="20.5" lengthAdjust="spacingAndGlyphs" stroke="#1a1a1a" stroke-width="0.35">20</text>
<text x="39.6" y="483.8" font-size="19.5" fill="#1a1a1a" textLength="38.3" lengthAdjust="spacingAndGlyphs" clip-path="url(#clipA)" stroke="#1a1a1a" stroke-width="0.25">May</text>
<text x="254" y="483.9" font-size="19.5" fill="#1a1a1a" text-anchor="end" textLength="20.5" lengthAdjust="spacingAndGlyphs" stroke="#1a1a1a" stroke-width="0.35">15</text>
<text x="39.6" y="514.32" font-size="19.5" fill="#1a1a1a" textLength="42.9" lengthAdjust="spacingAndGlyphs" clip-path="url(#clipA)" stroke="#1a1a1a" stroke-width="0.25">June</text>
<text x="254" y="514.42" font-size="19.5" fill="#1a1a1a" text-anchor="end" textLength="20.5" lengthAdjust="spacingAndGlyphs" stroke="#1a1a1a" stroke-width="0.35">15</text>
<text x="39.6" y="544.84" font-size="19.5" fill="#1a1a1a" textLength="36" lengthAdjust="spacingAndGlyphs" clip-path="url(#clipA)" stroke="#1a1a1a" stroke-width="0.25">July</text>
<text x="254" y="544.94" font-size="19.5" fill="#1a1a1a" text-anchor="end" textLength="20.5" lengthAdjust="spacingAndGlyphs" stroke="#1a1a1a" stroke-width="0.35">18</text>
<text x="39.6" y="575.36" font-size="19.5" fill="#1a1a1a" textLength="64.5" lengthAdjust="spacingAndGlyphs" clip-path="url(#clipA)" stroke="#1a1a1a" stroke-width="0.25">August</text>
<text x="254" y="575.46" font-size="19.5" fill="#1a1a1a" text-anchor="end" textLength="20.5" lengthAdjust="spacingAndGlyphs" stroke="#1a1a1a" stroke-width="0.35">14</text>
<text x="39.6" y="605.88" font-size="19.5" fill="#1a1a1a" textLength="104" lengthAdjust="spacingAndGlyphs" clip-path="url(#clipA)" stroke="#1a1a1a" stroke-width="0.25">September</text>
<text x="254" y="605.98" font-size="19.5" fill="#1a1a1a" text-anchor="end" textLength="20.5" lengthAdjust="spacingAndGlyphs" stroke="#1a1a1a" stroke-width="0.35">15</text>
<text x="39.6" y="636.4" font-size="19.5" fill="#1a1a1a" textLength="75.3" lengthAdjust="spacingAndGlyphs" clip-path="url(#clipA)" stroke="#1a1a1a" stroke-width="0.25">October</text>
<text x="254" y="636.5" font-size="19.5" fill="#1a1a1a" text-anchor="end" textLength="20.5" lengthAdjust="spacingAndGlyphs" stroke="#1a1a1a" stroke-width="0.35">10</text>
<text x="39.6" y="666.92" font-size="19.5" fill="#1a1a1a" textLength="98.8" lengthAdjust="spacingAndGlyphs" clip-path="url(#clipA)" stroke="#1a1a1a" stroke-width="0.25">November</text>
<text x="254" y="667.02" font-size="19.5" fill="#1a1a1a" text-anchor="end" textLength="20.5" lengthAdjust="spacingAndGlyphs" stroke="#1a1a1a" stroke-width="0.35">12</text>
<text x="39.6" y="697.44" font-size="19.5" fill="#1a1a1a" textLength="96.5" lengthAdjust="spacingAndGlyphs" clip-path="url(#clipA)" stroke="#1a1a1a" stroke-width="0.25">December</text>
<text x="254" y="697.54" font-size="19.5" fill="#1a1a1a" text-anchor="end" textLength="17.5" lengthAdjust="spacingAndGlyphs" stroke="#1a1a1a" stroke-width="0.35">11</text>
<rect x="35.8" y="704.76" width="107" height="30.02" fill="#d6d6d6"/>
<text x="39.6" y="727.86" font-size="19.5" fill="#0c0c0c" font-weight="bold" textLength="41" lengthAdjust="spacingAndGlyphs">Sum</text>
<text x="253.8" y="727.86" font-size="19.5" fill="#0c0c0c" font-weight="bold" text-anchor="end" textLength="30.3" lengthAdjust="spacingAndGlyphs">161</text>
<line x1="37" y1="339.3" x2="140" y2="339.3" stroke="#ffffff" stroke-width="2"/>
<line x1="37" y1="337.2" x2="138" y2="337.2" stroke="#7b5fb0" stroke-width="3"/>
<line x1="37" y1="704.4" x2="138" y2="704.4" stroke="#7b5fb0" stroke-width="3"/>
<rect x="36" y="334.5" width="3.5" height="6" fill="#7b5fb0"/>
<rect x="36" y="701.5" width="3.5" height="6" fill="#7b5fb0"/>
<path d="M143,311 V338.5 H487 V311" fill="none" stroke="#c0323a" stroke-width="2.6"/>
<rect x="139.3" y="333.8" width="9.2" height="8.6" fill="#c0323a" stroke="#ffffff" stroke-width="1.4"/>
<rect x="482.8" y="333.8" width="9.2" height="8.6" fill="#c0323a" stroke="#ffffff" stroke-width="1.4"/>
<rect x="139.8" y="307.8" width="8.5" height="3.5" fill="#c0323a"/>
<rect x="483.3" y="307.8" width="8.5" height="3.5" fill="#c0323a"/>
<line x1="143.1" y1="343" x2="143.1" y2="704.5" stroke="#ffffff" stroke-width="6"/>
<line x1="487" y1="343" x2="487" y2="704.5" stroke="#ffffff" stroke-width="6"/>
<line x1="143.1" y1="343" x2="143.1" y2="704.5" stroke="#1f6fb8" stroke-width="3.4"/>
<line x1="487" y1="343" x2="487" y2="704.5" stroke="#1f6fb8" stroke-width="3.4"/>
<line x1="148" y1="704.5" x2="490" y2="704.5" stroke="#1f6fb8" stroke-width="3"/>
<rect x="139.3" y="700.2" width="9.2" height="9.2" fill="#1f6fb8" stroke="#ffffff" stroke-width="1.4"/>
<rect x="278.1" y="444.8" width="600" height="438.2" fill="#ffffff"/>
<line x1="324.5" y1="737.5" x2="870" y2="737.5" stroke="#d9d9d9" stroke-width="1.2"/>
<text x="306.5" y="742.3" font-size="17" fill="#595959" text-anchor="end" textLength="8.3" lengthAdjust="spacingAndGlyphs">0</text>
<line x1="324.5" y1="694.88" x2="870" y2="694.88" stroke="#d9d9d9" stroke-width="1.2"/>
<text x="306.5" y="699.67" font-size="17" fill="#595959" text-anchor="end" textLength="8.3" lengthAdjust="spacingAndGlyphs">5</text>
<line x1="324.5" y1="652.25" x2="870" y2="652.25" stroke="#d9d9d9" stroke-width="1.2"/>
<text x="306.5" y="657.05" font-size="17" fill="#595959" text-anchor="end" textLength="17.3" lengthAdjust="spacingAndGlyphs">10</text>
<line x1="324.5" y1="609.62" x2="870" y2="609.62" stroke="#d9d9d9" stroke-width="1.2"/>
<text x="306.5" y="614.42" font-size="17" fill="#595959" text-anchor="end" textLength="17.3" lengthAdjust="spacingAndGlyphs">15</text>
<line x1="324.5" y1="567" x2="870" y2="567" stroke="#d9d9d9" stroke-width="1.2"/>
<text x="306.5" y="571.8" font-size="17" fill="#595959" text-anchor="end" textLength="17.3" lengthAdjust="spacingAndGlyphs">20</text>
<line x1="324.5" y1="524.38" x2="870" y2="524.38" stroke="#d9d9d9" stroke-width="1.2"/>
<text x="306.5" y="529.17" font-size="17" fill="#595959" text-anchor="end" textLength="17.3" lengthAdjust="spacingAndGlyphs">25</text>
<text x="457.5" y="489.6" font-size="27.5" fill="#44546a" font-weight="bold" textLength="368" lengthAdjust="spacingAndGlyphs">Sales by Month by Location</text>
<rect x="330.6" y="635.2" width="12.1" height="102.3" fill="url(#g1)"/>
<rect x="345.9" y="609.62" width="12.1" height="127.88" fill="url(#g2)"/>
<rect x="361.2" y="575.52" width="12.1" height="161.97" fill="url(#g3)"/>
<rect x="385.67" y="626.67" width="12.1" height="110.83" fill="url(#g1)"/>
<rect x="400.97" y="592.58" width="12.1" height="144.93" fill="url(#g2)"/>
<rect x="416.27" y="592.58" width="12.1" height="144.93" fill="url(#g3)"/>
<rect x="440.74" y="618.15" width="12.1" height="119.35" fill="url(#g1)"/>
<rect x="456.04" y="618.15" width="12.1" height="119.35" fill="url(#g2)"/>
<rect x="471.34" y="601.1" width="12.1" height="136.4" fill="url(#g3)"/>
<rect x="495.81" y="635.2" width="12.1" height="102.3" fill="url(#g1)"/>
<rect x="511.11" y="584.05" width="12.1" height="153.45" fill="url(#g2)"/>
<rect x="526.41" y="567" width="12.1" height="170.5" fill="url(#g3)"/>
<rect x="550.88" y="609.62" width="12.1" height="127.88" fill="url(#g1)"/>
<rect x="566.18" y="592.58" width="12.1" height="144.93" fill="url(#g2)"/>
<rect x="581.48" y="575.52" width="12.1" height="161.97" fill="url(#g3)"/>
<rect x="605.95" y="609.62" width="12.1" height="127.88" fill="url(#g1)"/>
<rect x="621.25" y="601.1" width="12.1" height="136.4" fill="url(#g2)"/>
<rect x="636.55" y="549.95" width="12.1" height="187.55" fill="url(#g3)"/>
<rect x="661.02" y="584.05" width="12.1" height="153.45" fill="url(#g1)"/>
<rect x="676.32" y="592.58" width="12.1" height="144.93" fill="url(#g2)"/>
<rect x="691.62" y="567" width="12.1" height="170.5" fill="url(#g3)"/>
<rect x="716.09" y="618.15" width="12.1" height="119.35" fill="url(#g1)"/>
<rect x="731.39" y="601.1" width="12.1" height="136.4" fill="url(#g2)"/>
<rect x="746.69" y="558.48" width="12.1" height="179.03" fill="url(#g3)"/>
<rect x="771.16" y="609.62" width="12.1" height="127.88" fill="url(#g1)"/>
<rect x="786.46" y="584.05" width="12.1" height="153.45" fill="url(#g2)"/>
<rect x="801.76" y="575.52" width="12.1" height="161.97" fill="url(#g3)"/>
<rect x="826.23" y="652.25" width="12.1" height="85.25" fill="url(#g1)"/>
<rect x="841.53" y="575.52" width="12.1" height="161.97" fill="url(#g2)"/>
<rect x="856.83" y="584.05" width="12.1" height="153.45" fill="url(#g3)"/>
<rect x="881.3" y="635.2" width="12.1" height="102.3" fill="url(#g1)"/>
<rect x="896.6" y="592.58" width="12.1" height="144.93" fill="url(#g2)"/>
<rect x="911.9" y="567" width="12.1" height="170.5" fill="url(#g3)"/>
<rect x="936.37" y="643.73" width="12.1" height="93.78" fill="url(#g1)"/>
<rect x="951.67" y="601.1" width="12.1" height="136.4" fill="url(#g2)"/>
<rect x="966.97" y="584.05" width="12.1" height="153.45" fill="url(#g3)"/>
<text x="355.4" y="761" font-size="16.5" fill="#595959" text-anchor="end" transform="rotate(-45 355.4 761)">January</text>
<text x="410.47" y="761" font-size="16.5" fill="#595959" text-anchor="end" transform="rotate(-45 410.47 761)">February</text>
<text x="465.54" y="761" font-size="16.5" fill="#595959" text-anchor="end" transform="rotate(-45 465.54 761)">March</text>
<text x="520.61" y="761" font-size="16.5" fill="#595959" text-anchor="end" transform="rotate(-45 520.61 761)">April</text>
<text x="575.68" y="761" font-size="16.5" fill="#595959" text-anchor="end" transform="rotate(-45 575.68 761)">May</text>
<text x="630.75" y="761" font-size="16.5" fill="#595959" text-anchor="end" transform="rotate(-45 630.75 761)">June</text>
<text x="685.82" y="761" font-size="16.5" fill="#595959" text-anchor="end" transform="rotate(-45 685.82 761)">July</text>
<text x="740.89" y="761" font-size="16.5" fill="#595959" text-anchor="end" transform="rotate(-45 740.89 761)">August</text>
<text x="795.96" y="761" font-size="16.5" fill="#595959" text-anchor="end" transform="rotate(-45 795.96 761)">September</text>
<text x="851.03" y="761" font-size="16.5" fill="#595959" text-anchor="end" transform="rotate(-45 851.03 761)">October</text>
<text x="906.1" y="761" font-size="16.5" fill="#595959" text-anchor="end" transform="rotate(-45 906.1 761)">November</text>
<text x="961.17" y="761" font-size="16.5" fill="#595959" text-anchor="end" transform="rotate(-45 961.17 761)">December</text>
<rect x="497" y="849" width="10.3" height="10.3" fill="#ed7d31"/>
<text x="512" y="857.5" font-size="17" fill="#595959" textLength="71" lengthAdjust="spacingAndGlyphs">Retailer 1</text>
<rect x="601" y="849" width="10.3" height="10.3" fill="#ffc000"/>
<text x="617" y="857.5" font-size="17" fill="#595959" textLength="71" lengthAdjust="spacingAndGlyphs">Retailer 2</text>
<rect x="707" y="849" width="10.3" height="10.3" fill="#70ad47"/>
<text x="722" y="857.5" font-size="17" fill="#595959" textLength="71" lengthAdjust="spacingAndGlyphs">Retailer 3</text>
<rect x="278.1" y="444.8" width="640" height="438.2" fill="none" stroke="#6d6d6d" stroke-width="2"/>
<circle cx="278.1" cy="444.8" r="6.8" fill="#ffffff" stroke="#6d6d6d" stroke-width="2.6"/>
<circle cx="642" cy="444.8" r="6.8" fill="#ffffff" stroke="#6d6d6d" stroke-width="2.6"/>
<circle cx="278.1" cy="663.5" r="6.8" fill="#ffffff" stroke="#6d6d6d" stroke-width="2.6"/>
<circle cx="278.1" cy="883" r="6.8" fill="#ffffff" stroke="#6d6d6d" stroke-width="2.6"/>
<circle cx="642" cy="883" r="6.8" fill="#ffffff" stroke="#6d6d6d" stroke-width="2.6"/>
<g filter="url(#sh)">
<rect x="771" y="-10" width="100" height="13.5" fill="#ffffff" rx="4"/>
<rect x="1140" y="-10" width="100" height="13.5" fill="#ffffff"/>
</g>
<linearGradient id="gband" x1="0" y1="0" x2="0" y2="1"><stop offset="0" stop-color="#000" stop-opacity="0.13"/><stop offset="0.35" stop-color="#000" stop-opacity="0.06"/><stop offset="1" stop-color="#000" stop-opacity="0.01"/></linearGradient>
<rect x="846" y="92" width="348" height="27" fill="url(#gband)"/>
<g filter="url(#sh2)">
<rect x="856.5" y="-10" width="297" height="102.5" fill="#ffffff" stroke="#c4c4c4" stroke-width="1" rx="7"/>
</g>
<path d="M884,17 L893,8 L903,18 L894,27 Z" fill="#fff" stroke="#404040" stroke-width="1.4"/>
<path d="M892,9 V4 Q895,1.5 895,6 V14" fill="none" stroke="#404040" stroke-width="1.3"/>
<path d="M900,11 Q905,9 905,14 V27" fill="none" stroke="#2f7dc4" stroke-width="2.2"/>
<rect x="877" y="31" width="36" height="9" fill="#ed7d31"/>
<path d="M916,19.75 L920,24.25 L924,19.75" fill="none" stroke="#333" stroke-width="1.7"/>
<path d="M955,28 H947 V6 H971" fill="none" stroke="#2b2b2b" stroke-width="1.5"/>
<path d="M958,28 L961,21 L975,7 Q979,5 980,9 L966,23 Z" fill="#fff" stroke="#2f7dc4" stroke-width="1.8"/>
<rect x="945" y="31" width="37" height="9" fill="#4472c4"/>
<path d="M985,19.75 L989,24.25 L993,19.75" fill="none" stroke="#333" stroke-width="1.7"/>
<text x="882" y="69" font-size="17.5" fill="#262626" textLength="21.5" lengthAdjust="spacingAndGlyphs">Fill</text>
<text x="933" y="69" font-size="17.5" fill="#262626" textLength="57" lengthAdjust="spacingAndGlyphs">Outline</text>
<rect x="1002.5" y="25.5" width="145.5" height="35.5" fill="#ffffff" stroke="#777777" stroke-width="1.2" rx="6"/>
<text x="1007.6" y="49.2" font-size="18" fill="#262626" textLength="84" lengthAdjust="spacingAndGlyphs">Chart Area</text>
<path d="M1132.5,40.5 L1137.5,45.5 L1142.5,40.5" fill="none" stroke="#262626" stroke-width="2"/>
<text x="1161.8" y="46.8" font-size="18.5" fill="#137a43">Format</text>
<g filter="url(#sh2)">
<rect x="856.5" y="119.3" width="500" height="900" fill="#ffffff" stroke="#cdcdcd" stroke-width="1" rx="7"/>
</g>
<rect x="865" y="127.5" width="323" height="39.7" fill="#ffffff" stroke="#868686" stroke-width="1.6"/>
<text x="885" y="153.2" font-size="18" fill="#6a6a6a" textLength="143" lengthAdjust="spacingAndGlyphs">Search the menus</text>
<text x="915.5" y="201.6" font-size="19" fill="#262626" textLength="28.4" lengthAdjust="spacingAndGlyphs">Cut</text>
<text x="915.5" y="243.8" font-size="19" fill="#262626" textLength="41.6" lengthAdjust="spacingAndGlyphs">Copy</text>
<text x="915.5" y="289" font-size="19" fill="#262626" font-weight="bold" textLength="119" lengthAdjust="spacingAndGlyphs">Paste Options:</text>
<text x="915.5" y="387" font-size="19" fill="#262626" textLength="161.8" lengthAdjust="spacingAndGlyphs">Reset to Match Style</text>
<text x="915.5" y="434.2" font-size="19" fill="#262626" textLength="49" lengthAdjust="spacingAndGlyphs">Font...</text>
<text x="915.5" y="481.4" font-size="19" fill="#262626" textLength="166" lengthAdjust="spacingAndGlyphs">Change Chart Type...</text>
<text x="915.5" y="525" font-size="19" fill="#262626" textLength="150.8" lengthAdjust="spacingAndGlyphs">Save as Template...</text>
<text x="915.5" y="567" font-size="19" fill="#262626" textLength="101" lengthAdjust="spacingAndGlyphs">Select Data...</text>
<text x="915.5" y="609.8" font-size="19" fill="#262626" textLength="98.5" lengthAdjust="spacingAndGlyphs">Move Chart...</text>
<text x="915.5" y="652.6" font-size="19" fill="#a6a6a6" textLength="115" lengthAdjust="spacingAndGlyphs">3-D Rotation...</text>
<text x="915.5" y="701" font-size="19" fill="#a6a6a6" textLength="49" lengthAdjust="spacingAndGlyphs">Group</text>
<text x="915.5" y="742.5" font-size="19" fill="#a6a6a6" textLength="110" lengthAdjust="spacingAndGlyphs">Bring to Front</text>
<text x="915.5" y="785" font-size="19" fill="#a6a6a6" textLength="104" lengthAdjust="spacingAndGlyphs">Send to Back</text>
<text x="915.5" y="832.7" font-size="19" fill="#262626" textLength="132" lengthAdjust="spacingAndGlyphs">Save as Picture...</text>
<text x="915.5" y="880" font-size="19" fill="#262626" textLength="122" lengthAdjust="spacingAndGlyphs">Assign Macro...</text>
<text x="915.5" y="927" font-size="19" fill="#262626" textLength="116" lengthAdjust="spacingAndGlyphs">View Alt Text...</text>
<text x="915.5" y="969" font-size="19" fill="#262626" textLength="150" lengthAdjust="spacingAndGlyphs">Format Chart Area...</text>
<line x1="907.7" y1="358" x2="1193.5" y2="358" stroke="#d6d6d6" stroke-width="1.2"/>
<line x1="907.7" y1="405.3" x2="1193.5" y2="405.3" stroke="#d6d6d6" stroke-width="1.2"/>
<line x1="907.7" y1="452.8" x2="1193.5" y2="452.8" stroke="#d6d6d6" stroke-width="1.2"/>
<line x1="907.7" y1="670.3" x2="1193.5" y2="670.3" stroke="#d6d6d6" stroke-width="1.2"/>
<line x1="907.7" y1="803.5" x2="1193.5" y2="803.5" stroke="#d6d6d6" stroke-width="1.2"/>
<line x1="907.7" y1="850.8" x2="1193.5" y2="850.8" stroke="#d6d6d6" stroke-width="1.2"/>
<line x1="907.7" y1="898" x2="1193.5" y2="898" stroke="#d6d6d6" stroke-width="1.2"/>
<path d="M1174.5,688 L1181.5,694.5 L1174.5,701" fill="none" stroke="#9a9a9a" stroke-width="1.4"/>
<path d="M1174.5,729.5 L1181.5,736 L1174.5,742.5" fill="none" stroke="#9a9a9a" stroke-width="1.4"/>
<path d="M1174.5,772 L1181.5,778.5 L1174.5,785" fill="none" stroke="#9a9a9a" stroke-width="1.4"/>
<line x1="1160" y1="727.5" x2="1160" y2="745" stroke="#c8c8c8" stroke-width="1.2"/>
<line x1="1160" y1="770" x2="1160" y2="787.5" stroke="#c8c8c8" stroke-width="1.2"/>
<path d="M883,183 L893,199 M895,183 L885,199" fill="none" stroke="#505050" stroke-width="1.5"/>
<circle cx="884" cy="202" r="3" fill="#ffffff" stroke="#2f7dc4" stroke-width="1.8"/>
<circle cx="894.5" cy="202" r="3" fill="#ffffff" stroke="#2f7dc4" stroke-width="1.8"/>
<path d="M884,225 H877.5 V244 H884" fill="none" stroke="#3a3a3a" stroke-width="1.5"/>
<path d="M885,229 H894.5 L901,235.5 V249 H885 Z" fill="#fff" stroke="#3a3a3a" stroke-width="1.5"/>
<path d="M889,239 H897 M889,243 H897" fill="none" stroke="#3a3a3a" stroke-width="1.2"/>
<path d="M880.5,271 H896.5 V291 H880.5 Z" fill="#fff" stroke="#e8961e" stroke-width="1.8"/>
<path d="M883.5,275 V270.5 H886 Q886.5,267 888.2,267 Q890,267 890.5,270.5 H893 V275 Z" fill="#fff" stroke="#6a6a6a" stroke-width="1.3"/>
<rect x="890.5" y="278.5" width="10" height="12.5" fill="#fff" stroke="#3a3a3a" stroke-width="1.6"/>
<path d="M918.5,316 H941.5 V344.5 H918.5 Z" fill="#fff" stroke="#e8961e" stroke-width="2"/>
<path d="M923.5,320.5 V315 H927 Q927.5,311.5 929.5,311.5 Q931.5,311.5 932,315 H935.5 V320.5 Z" fill="#fff" stroke="#6a6a6a" stroke-width="1.4"/>
<rect x="934" y="328" width="14" height="17.5" fill="#fff" stroke="#3a3a3a" stroke-width="1.8"/>
<path d="M886.2,368.6 H897.3 V391.2 H880.5 V377.5" fill="none" stroke="#2b2b2b" stroke-width="1.5"/>
<path d="M879.2,373.3 H884 Q888.5,373.3 888.5,378.5" fill="none" stroke="#2f8ad8" stroke-width="1.6"/>
<path d="M882.2,370 L878.6,373.3 L882.2,376.6" fill="none" stroke="#2f8ad8" stroke-width="1.6"/>
<path d="M890.5,376.2 H893 M890.8,384 H893" fill="none" stroke="#555" stroke-width="1.2"/>
<rect x="884.2" y="382.8" width="4" height="2.8" fill="#cfcfcf" stroke="#777" stroke-width="0.8"/>
<path d="M878.5,439.3 L888.8,415.8 L899.1,439.3 M882,432.5 H895.6" fill="none" stroke="#3a3a3a" stroke-width="1.7"/>
<rect x="877" y="474" width="7" height="12.5" fill="#c4c4c4" stroke="#6a6a6a" stroke-width="1"/>
<rect x="884" y="463" width="8" height="23.5" fill="#fff" stroke="#3a3a3a" stroke-width="1.4"/>
<rect x="892" y="468" width="8" height="18.5" fill="#5fa8e6" stroke="#2f7dc4" stroke-width="1.3"/>
<path d="M878.8,529 V516.5 H884.3 M884.3,529 V506 H891.5 V510.5 H897 V516" fill="none" stroke="#3a3a3a" stroke-width="1.4"/>
<path d="M878.8,529 H889" fill="none" stroke="#3a3a3a" stroke-width="1.4"/>
<path d="M889.2,516.6 H897.5 L900,519 V528.8 H889.2 Z" fill="#fff" stroke="#b04fc8" stroke-width="1.5"/>
<path d="M892,516.6 V520.5 H897 V516.6 M892,528.8 V524.5 H897 V528.8" fill="none" stroke="#b04fc8" stroke-width="1.2"/>
<rect x="877.5" y="550" width="15.5" height="13" fill="#5aa3e6"/>
<path d="M877.5,556.5 H893 M885.2,550 V570 M877.5,563 H890" fill="none" stroke="#2b2b2b" stroke-width="1.1"/>
<path d="M877.5,550 V570.5 H890 M893,550 H900 V553" fill="none" stroke="#2b2b2b" stroke-width="1.4"/>
<rect x="890.8" y="563.5" width="4" height="7.5" fill="#5aa3e6" stroke="#1f6fb8" stroke-width="1"/>
<rect x="895.8" y="557" width="4.5" height="14" fill="#fff" stroke="#2b2b2b" stroke-width="1.3"/>
<path d="M877.5,592.5 H900 V597 M877.5,592.5 V612.5 H889.5 M877.5,596 H900 M877.5,601 H889 M877.5,606 H889 M885.5,592.5 V606 M893,592.5 V597" fill="none" stroke="#3a3a3a" stroke-width="1.3"/>
<rect x="890.8" y="606.5" width="4" height="7.8" fill="#5aa3e6" stroke="#1f6fb8" stroke-width="1"/>
<rect x="895.8" y="599.8" width="4.5" height="14.5" fill="#fff" stroke="#2b2b2b" stroke-width="1.3"/>
<path d="M878.5,637.5 H893.5 V657.2 H878.5 Z" fill="#e6e6e6" stroke="#a6a6a6" stroke-width="1.5"/>
<path d="M879,636.5 Q886,633 896.5,634.5 V655.5 L893.5,657.2 M893.5,637.5 L896.5,634.5" fill="none" stroke="#a6a6a6" stroke-width="1.4"/>
<rect x="876.8" y="680.7" width="2.6" height="2.6" fill="#a8a8a8"/>
<rect x="898.6" y="680.7" width="2.6" height="2.6" fill="#a8a8a8"/>
<rect x="876.8" y="701.9" width="2.6" height="2.6" fill="#a8a8a8"/>
<rect x="898.6" y="701.9" width="2.6" height="2.6" fill="#a8a8a8"/>
<rect x="880.5" y="683.5" width="12" height="12.5" fill="#ececec" stroke="#a8a8a8" stroke-width="1.4"/>
<rect x="885" y="688.8" width="13.5" height="13.5" fill="none" stroke="#a8a8a8" stroke-width="1.4"/>
<path d="M877.8,733.6 V724.2 H887" fill="none" stroke="#a8a8a8" stroke-width="1.4"/>
<rect x="881.8" y="728.3" width="14" height="14" fill="#d8d8d8" stroke="#a8a8a8" stroke-width="1.3"/>
<path d="M900.2,737.5 V746.6 H891" fill="none" stroke="#a8a8a8" stroke-width="1.4"/>
<rect x="877.8" y="766.7" width="9" height="9" fill="#fff" stroke="#a8a8a8" stroke-width="1.3"/>
<rect x="889" y="770.7" width="6.3" height="6.3" fill="#d4d4d4"/>
<rect x="881.8" y="778" width="6.3" height="6.3" fill="#d4d4d4"/>
<rect x="891.3" y="780.3" width="9" height="9" fill="#fff" stroke="#a8a8a8" stroke-width="1.3"/>
<path d="M900.5,922.6 V911.3 H877.3 V928.5 H884.5" fill="none" stroke="#2b2b2b" stroke-width="1.5"/>
<path d="M878.4,921.5 L883.5,916.3 L889.5,922.2 L892,920 L894,922 L897,922.2" fill="none" stroke="#2b2b2b" stroke-width="1.2"/>
<rect x="894" y="914.4" width="2" height="2" fill="#2b2b2b"/>
<rect x="886.5" y="925.3" width="14" height="6.6" fill="#fff" stroke="#1f7fd0" stroke-width="1.5"/>
<path d="M889.5,928.6 H897" fill="none" stroke="#2b2b2b" stroke-width="1.1"/>
<path d="M884.5,964 V953 Q885.5,950.5 887,953 V962 M884.5,954 L878,961 L883,966" fill="none" stroke="#3a3a3a" stroke-width="1.4"/>
<path d="M890,956 L894,962.5 L900.5,959.5" fill="none" stroke="#4aa3e8" stroke-width="1.8"/>
<line x1="936.5" y1="204.2" x2="944" y2="204.2" stroke="#262626" stroke-width="1.3"/>
<line x1="915.5" y1="246.4" x2="928" y2="246.4" stroke="#262626" stroke-width="1.3"/>
<line x1="1003" y1="389.6" x2="1010" y2="389.6" stroke="#262626" stroke-width="1.3"/>
<line x1="915.5" y1="436.8" x2="924.5" y2="436.8" stroke="#262626" stroke-width="1.3"/>
<line x1="1040.5" y1="484" x2="1047" y2="484" stroke="#262626" stroke-width="1.3"/>
<line x1="915.5" y1="527.6" x2="926" y2="527.6" stroke="#262626" stroke-width="1.3"/>
<line x1="924.5" y1="569.6" x2="933" y2="569.6" stroke="#262626" stroke-width="1.3"/>
<line x1="944.7" y1="612.4" x2="952.2" y2="612.4" stroke="#262626" stroke-width="1.3"/>
<line x1="950" y1="655.2" x2="959" y2="655.2" stroke="#a6a6a6" stroke-width="1.3"/>
<line x1="915.5" y1="703.6" x2="926.5" y2="703.6" stroke="#a6a6a6" stroke-width="1.3"/>
<line x1="992.8" y1="745.1" x2="999.3" y2="745.1" stroke="#a6a6a6" stroke-width="1.3"/>
<line x1="1010" y1="787.6" x2="1018.5" y2="787.6" stroke="#a6a6a6" stroke-width="1.3"/>
<line x1="915.5" y1="835.3" x2="926" y2="835.3" stroke="#262626" stroke-width="1.3"/>
<line x1="955.5" y1="882.6" x2="967" y2="882.6" stroke="#262626" stroke-width="1.3"/>
<line x1="957.5" y1="929.6" x2="969.5" y2="929.6" stroke="#262626" stroke-width="1.3"/>
<path d="M1212.4,519.2 H1097" fill="none" stroke="#ef7439" stroke-width="5.8"/>
<path d="M1073,519.3 L1101,508 L1094.5,519.3 L1101,530.6 Z" fill="#ef7439" stroke="none" stroke-width="1" stroke="#ef7439" stroke-width="0.6" stroke-linejoin="round"/>
<rect x="1194" y="0" width="21" height="965" fill="#ffffff"/>
<rect x="0" y="963" width="1215" height="2" fill="#ffffff"/>
<path d="M1194,519.2 H1212.4" fill="none" stroke="#ef7439" stroke-width="5.8"/></svg>
</body></html>
